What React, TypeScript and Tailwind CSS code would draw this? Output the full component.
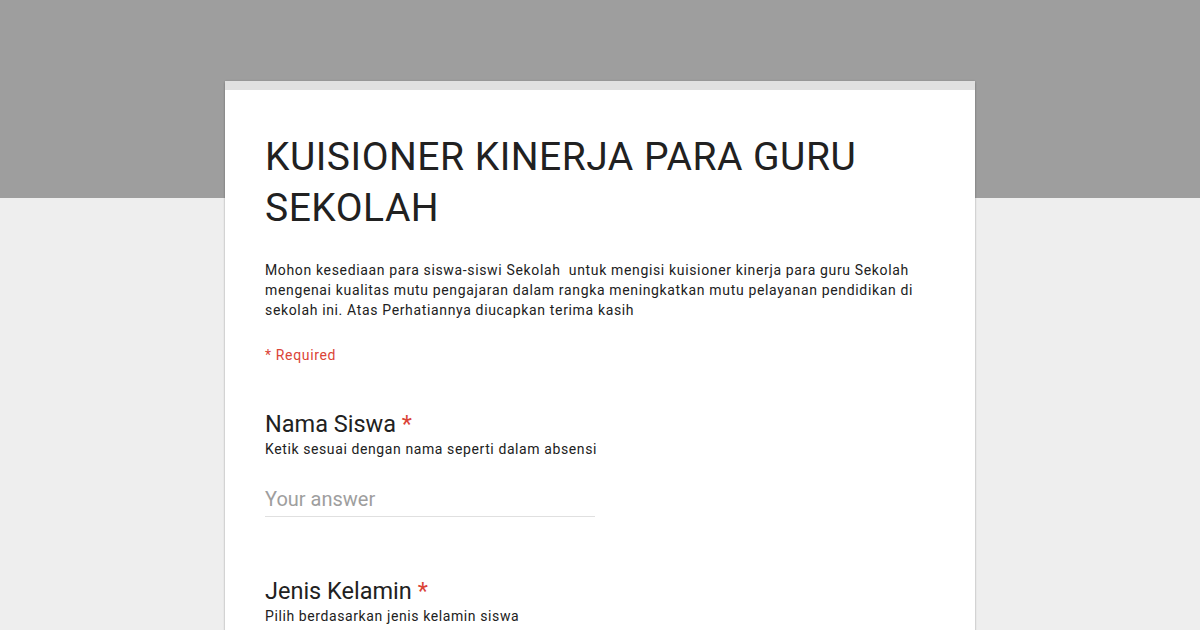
import React from "react";

export default function App() {
  return (
    <div
      className="w-[1200px] h-[630px] overflow-hidden bg-[linear-gradient(to_bottom,#9e9e9e_0px,#9e9e9e_198px,#eeeeee_198px,#eeeeee_100%)] pt-[81px]"
      style={{ fontFamily: "Roboto, 'Liberation Sans', sans-serif" }}
    >
      <div className="mx-auto w-[750px] bg-white shadow-[0_0_2px_rgba(0,0,0,0.12),0_2px_2px_rgba(0,0,0,0.24)] min-h-[700px]">
        <div className="h-[9px] bg-[#e0e0e0]" />
        <div className="px-10 pt-[42px]">
          <h1 className="text-[39px] leading-[51px] tracking-[0.5px] text-[#212121] font-normal">
            KUISIONER KINERJA PARA GURU
            <br />
            SEKOLAH
          </h1>
          <p className="mt-[26px] text-[14px] leading-[20px] tracking-[0.65px] text-[#212121] w-[670px] whitespace-pre-wrap">
            {"Mohon kesediaan para siswa-siswi Sekolah  untuk mengisi kuisioner kinerja para guru Sekolah mengenai kualitas mutu pengajaran dalam rangka meningkatkan mutu pelayanan pendidikan di sekolah ini. Atas Perhatiannya diucapkan terima kasih"}
          </p>
          <div className="mt-[25px] text-[14px] leading-[20px] tracking-[0.65px] text-[#db4437]">* Required</div>

          <div className="mt-[44px]">
            <div className="text-[23.5px] leading-[30px] text-[#212121]">
              Nama Siswa <span className="text-[#db4437]">*</span>
            </div>
            <div className="text-[14px] leading-[20px] tracking-[0.6px] text-[#212121]">
              Ketik sesuai dengan nama seperti dalam absensi
            </div>
            <div className="mt-[27px] w-[330px] border-b border-[#e0e0e0] pb-[4px]">
              <div className="text-[20px] leading-[26px] text-[#9e9e9e]">Your answer</div>
            </div>
          </div>

          <div className="mt-[59px]">
            <div className="text-[23.5px] leading-[30px] text-[#212121]">
              Jenis Kelamin <span className="text-[#db4437]">*</span>
            </div>
            <div className="text-[14px] leading-[20px] tracking-[0.6px] text-[#212121]">
              Pilih berdasarkan jenis kelamin siswa
            </div>
          </div>
        </div>
      </div>
    </div>
  );
}
